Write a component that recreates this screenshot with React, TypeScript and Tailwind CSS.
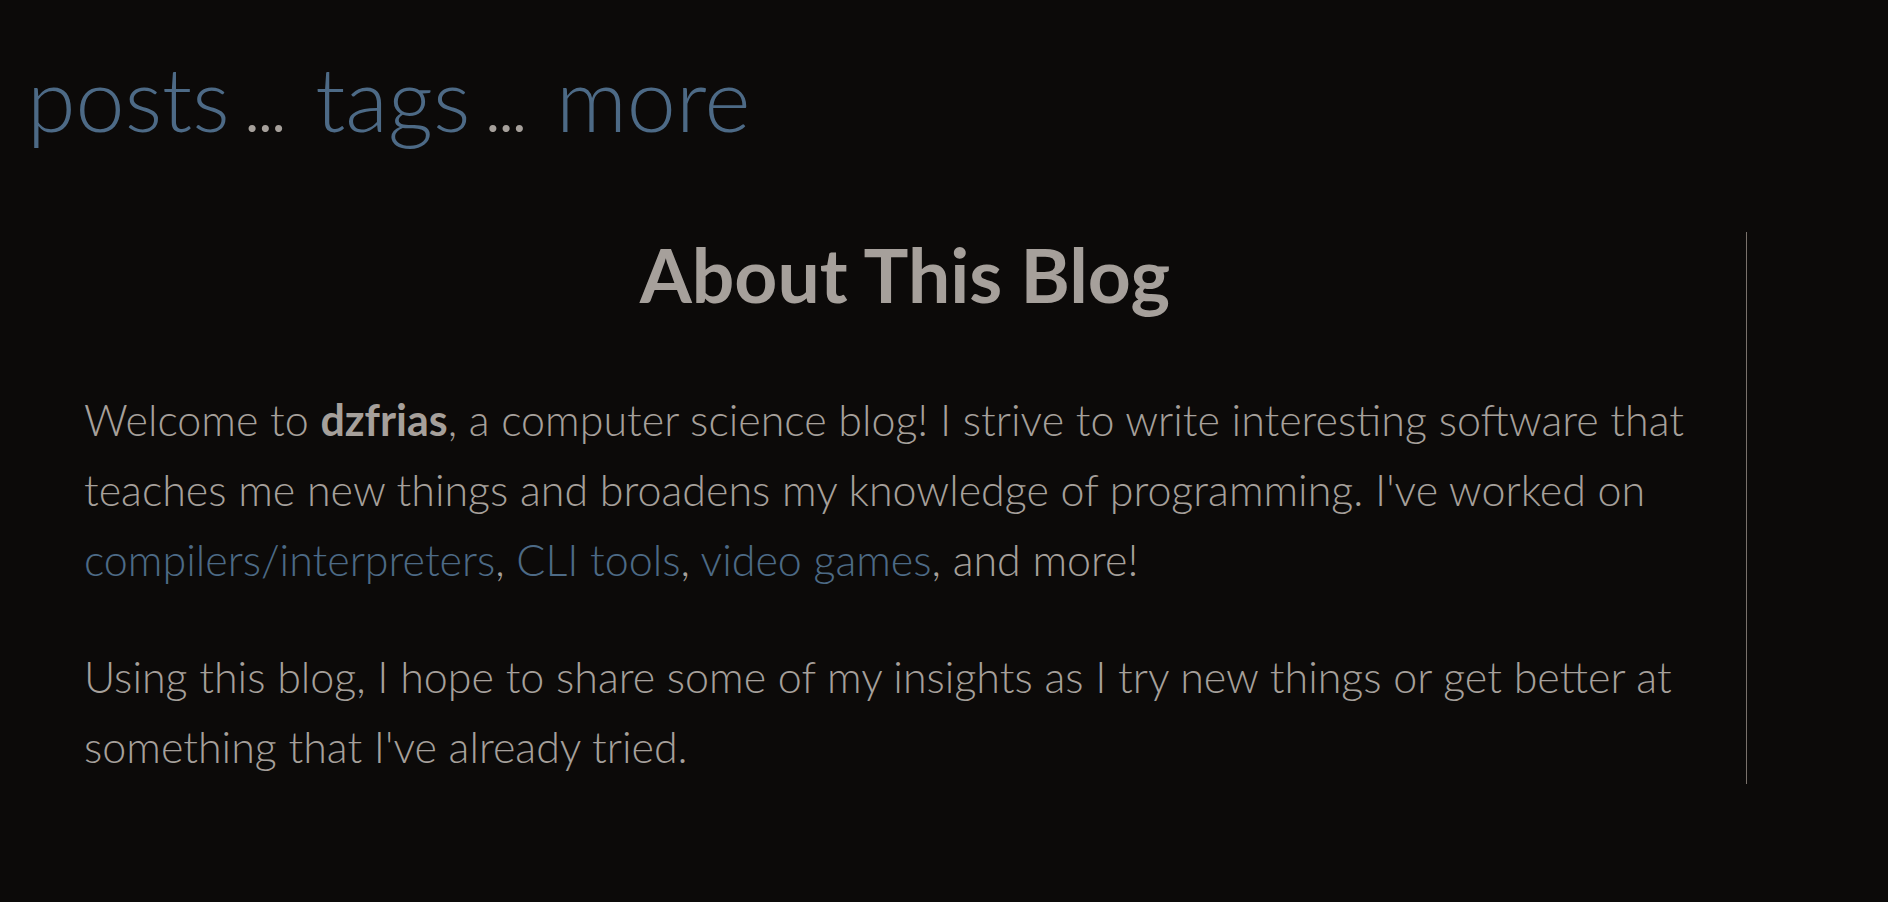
const linkClass = 'text-[#4d6a86] hover:underline'

function Dots() {
  return <span className="text-[56px] font-normal text-stone-400">...</span>
}

export default function App() {
  return (
    <div className="min-h-screen bg-stone-950 font-['Lato','Noto_Sans',sans-serif] text-stone-400">
      <nav className="flex items-baseline pt-[54px] pl-[27px] text-[88px] font-light leading-none">
        <a href="#" className={linkClass}>posts</a>
        <span className="ml-[16px] mr-[30px]"><Dots /></span>
        <a href="#" className={linkClass}>tags</a>
        <span className="ml-[16px] mr-[30px]"><Dots /></span>
        <a href="#" className={linkClass}>more</a>
      </nav>

      <main className="mt-[90px] ml-[64px] mr-[141px] border-r border-stone-500 px-[20px] pt-[5px] pb-[2px]">
        <h1 className="text-center text-[75px] font-bold leading-none">About This Blog</h1>

        <div className="mt-[73px] text-[43px] font-light leading-[70px]">
          <p className="mb-[47px]">
            Welcome to <b className="font-bold">dzfrias</b>, a computer science blog! I strive to write interesting
            software that teaches me new things and broadens my knowledge of programming. I&apos;ve worked on{' '}
            <a href="#" className={linkClass}>compilers/interpreters</a>,{' '}
            <a href="#" className={linkClass}>CLI tools</a>,{' '}
            <a href="#" className={linkClass}>video games</a>, and more!
          </p>
          <p>
            Using this blog, I hope to share some of my insights as I try new things or get better at something
            that I&apos;ve already tried.
          </p>
        </div>
      </main>
    </div>
  )
}
